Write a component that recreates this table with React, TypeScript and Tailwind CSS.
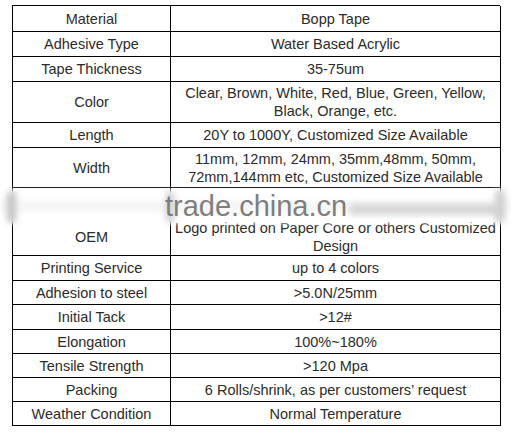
import React from "react";

type Row = { label: string; value: React.ReactNode; h: string; cls?: string };

const rows: Row[] = [
  { label: "Material", value: "Bopp Tape", h: "h-[26px]" },
  { label: "Adhesive Type", value: "Water Based Acrylic", h: "h-[25px]" },
  { label: "Tape Thickness", value: "35-75um", h: "h-[25px]" },
  {
    label: "Color",
    value: (
      <>
        Clear, Brown, White, Red, Blue, Green, Yellow,
        <br />
        Black, Orange, etc.
      </>
    ),
    h: "h-[41px]",
  },
  { label: "Length", value: "20Y to 1000Y, Customized Size Available", h: "h-[25px]" },
  {
    label: "Width",
    value: (
      <>
        11mm, 12mm, 24mm, 35mm,48mm, 50mm,
        <br />
        72mm,144mm etc, Customized Size Available
      </>
    ),
    h: "h-[40px]",
  },
  {
    label: "OEM",
    value: (
      <>
        Logo printed on Paper Core or others Customized
        <br />
        Design
      </>
    ),
    h: "h-[68px]",
    cls: "pt-[31px]",
  },
  { label: "Printing Service", value: "up to 4 colors", h: "h-[25px]" },
  { label: "Adhesion to steel", value: ">5.0N/25mm", h: "h-[24px]" },
  { label: "Initial Tack", value: ">12#", h: "h-[25px]" },
  { label: "Elongation", value: "100%~180%", h: "h-[24px]" },
  { label: "Tensile Strength", value: ">120 Mpa", h: "h-[24px]" },
  { label: "Packing", value: "6 Rolls/shrink, as per customers\u2019 request", h: "h-[24px]" },
  { label: "Weather Condition", value: "Normal Temperature", h: "h-[24px]" },
];

export default function App() {
  return (
    <div
      className="relative w-[511px] h-[433px] overflow-hidden bg-white text-[#2b2b2b]"
      style={{ fontFamily: '"Liberation Sans", Arial, sans-serif' }}
    >
      <div className="pt-[5px] pl-[12px]">
        <div className="grid w-[488px] grid-cols-[158px_330px] border-l border-t border-black text-[14.5px] leading-[18px]">
          {rows.map((r) => (
            <React.Fragment key={r.label}>
              <div className={`flex items-center justify-center whitespace-nowrap border-b border-r border-black text-center ${r.h} ${r.cls ?? ""}`}>
                {r.label}
              </div>
              <div className={`flex items-center justify-center whitespace-nowrap border-b border-r border-black text-center ${r.h} ${r.cls ?? ""}`}>
                <span>{r.value}</span>
              </div>
            </React.Fragment>
          ))}
        </div>
      </div>

      {/* watermark band */}
      <div className="pointer-events-none absolute left-0 right-0 top-[190px] h-[33px] bg-white/95 blur-[2px]" />
      <div className="pointer-events-none absolute left-0 right-0 top-[201px] h-[11px] bg-[#eeeeee]/60 blur-[3px]" />
      <div className="pointer-events-none absolute left-[7px] top-[192px] h-[30px] w-[9px] bg-[#c4c4c4] blur-[3px]" />
      <div className="pointer-events-none absolute left-[166px] top-[192px] h-[30px] w-[8px] bg-[#cfcfcf] blur-[3px]" />
      <div className="pointer-events-none absolute left-[350px] top-[204px] h-[11px] w-[150px] bg-[#cdcdcd]/80 blur-[3px]" />
      <div className="pointer-events-none absolute left-[495px] top-[190px] h-[32px] w-[10px] bg-[#d0d0d0] blur-[3px]" />
      <div className="pointer-events-none absolute left-[165px] top-[192px] text-[29px] leading-none text-[#7e7e7e]">
        trade.china.cn
      </div>
    </div>
  );
}
